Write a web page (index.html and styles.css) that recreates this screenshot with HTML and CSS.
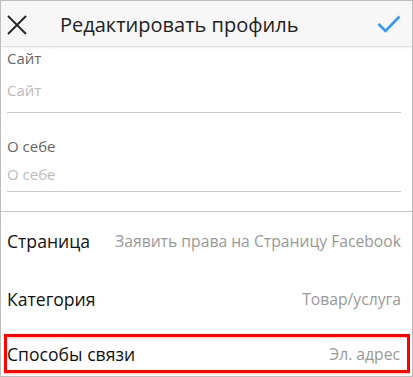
FILE: index.html
```html
<!DOCTYPE html>
<html lang="ru">
<head>
    <meta charset="UTF-8">
    <meta name="viewport" content="width=device-width, initial-scale=1.0">
    <title>Редактировать профиль</title>
    <link rel="stylesheet" href="styles.css">
</head>
<body>
    <div class="screen">
        <div class="topbar">
            <svg class="icon-close" width="22" height="22" viewBox="0 0 22 22">
                <path d="M2 2 L20 20 M20 2 L2 20" stroke="#222" stroke-width="1.8" fill="none"/>
            </svg>
            <div class="title">Редактировать профиль</div>
            <svg class="icon-done" width="24" height="20" viewBox="0 0 24 20">
                <path d="M1.5 10 L8.5 17 L22.5 2.5" stroke="#3897f0" stroke-width="2.6" fill="none"/>
            </svg>
        </div>
        <div class="fields">
            <div class="field">
                <div class="field-label">Сайт</div>
                <div class="field-input">Сайт</div>
            </div>
            <div class="field field-bio">
                <div class="field-label">О себе</div>
                <div class="field-input">О себе</div>
            </div>
        </div>
        <div class="rows">
            <div class="row">
                <span class="row-name">Страница</span>
                <span class="row-value">Заявить права на Страницу Facebook</span>
            </div>
            <div class="row">
                <span class="row-name">Категория</span>
                <span class="row-value">Товар/услуга</span>
            </div>
            <div class="row row-marked">
                <span class="row-name">Способы связи</span>
                <span class="row-value">Эл. адрес</span>
            </div>
        </div>
    </div>
</body>
</html>
```

FILE: styles.css
```css
body {
    margin: 0;
    padding: 0;
    font-family: "Open Sans", "Noto Sans", sans-serif;
    background-color: #fff;
}
.screen {
    width: 413px;
    height: 377px;
    box-sizing: border-box;
    border: 1px solid #bdbdbd;
    overflow: hidden;
    display: flex;
    flex-direction: column;
}
.topbar {
    height: 45px;
    flex-shrink: 0;
    background-color: #f7f7f7;
    border-bottom: 1px solid #e2e2e2;
    box-shadow: 0 1px 2px rgba(0, 0, 0, 0.06);
    display: flex;
    align-items: center;
    padding: 0 11px 0 5px;
}
.icon-close {
    margin-top: 2px;
}
.title {
    flex: 1;
    margin-left: 32px;
    font-size: 20px;
    color: #222;
    margin-top: 1px;
}
.icon-done {
    margin-top: 1px;
}
.fields {
    padding: 0 11px 0 6px;
}
.field {
    border-bottom: 1px solid #c8c8c8;
}
.field-label {
    font-size: 15px;
    color: #666;
    padding-top: 1px;
    line-height: 20px;
}
.field-input {
    font-size: 15px;
    color: #bbb;
    line-height: 20px;
    padding: 12px 0 12px;
}
.field-bio .field-label {
    padding-top: 23px;
}
.field-bio .field-input {
    padding: 8px 0 7px;
}
.rows {
    margin-top: 19px;
    border-top: 1px solid #c8c8c8;
}
.row {
    height: 58px;
    display: flex;
    align-items: center;
    justify-content: space-between;
    padding: 0 11px 0 6px;
}
.row-name {
    font-size: 17.6px;
    color: #111;
    white-space: nowrap;
}
.row-value {
    font-size: 15.7px;
    color: #999;
    white-space: nowrap;
    margin-left: 20px;
}
.row-marked {
    height: 33px;
    margin: 6px 2px 0 3px;
    border: 3px solid #f00;
    padding: 0 7px 0 0;
}
```
